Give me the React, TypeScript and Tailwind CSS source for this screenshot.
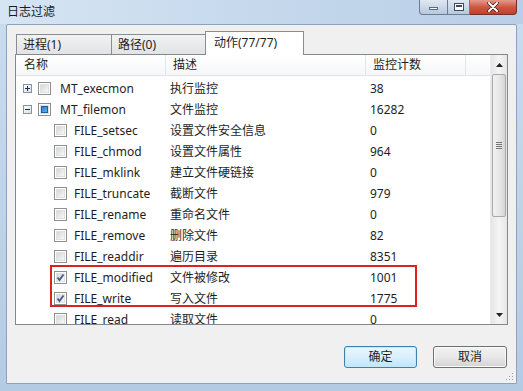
import * as React from 'react'

const FONT = '"Noto Sans", "Noto Sans CJK SC", sans-serif'

type Row = {
  name: string
  desc: string
  count: string
  level: 0 | 1
  expander?: '+' | '-'
  state: 'off' | 'on' | 'mixed'
}

const ROWS: Row[] = [
  { name: 'MT_execmon', desc: '执行监控', count: '38', level: 0, expander: '+', state: 'off' },
  { name: 'MT_filemon', desc: '文件监控', count: '16282', level: 0, expander: '-', state: 'mixed' },
  { name: 'FILE_setsec', desc: '设置文件安全信息', count: '0', level: 1, state: 'off' },
  { name: 'FILE_chmod', desc: '设置文件属性', count: '964', level: 1, state: 'off' },
  { name: 'FILE_mklink', desc: '建立文件硬链接', count: '0', level: 1, state: 'off' },
  { name: 'FILE_truncate', desc: '截断文件', count: '979', level: 1, state: 'off' },
  { name: 'FILE_rename', desc: '重命名文件', count: '0', level: 1, state: 'off' },
  { name: 'FILE_remove', desc: '删除文件', count: '82', level: 1, state: 'off' },
  { name: 'FILE_readdir', desc: '遍历目录', count: '8351', level: 1, state: 'off' },
  { name: 'FILE_modified', desc: '文件被修改', count: '1001', level: 1, state: 'on' },
  { name: 'FILE_write', desc: '写入文件', count: '1775', level: 1, state: 'on' },
  { name: 'FILE_read', desc: '读取文件', count: '0', level: 1, state: 'off' },
]

function Check({ state }: { state: Row['state'] }) {
  return (
    <span className="relative block w-[13px] h-[13px] shrink-0 border border-[#8e8f8f] bg-white p-px">
      <span className="block w-full h-full bg-gradient-to-br from-[#d4d6d9] to-[#f8f8f8] border border-[#e0e0e0]" />
      {state === 'mixed' && (
        <span className="absolute left-[2px] top-[2px] w-[7px] h-[7px] border border-[#1d5e9c] bg-gradient-to-br from-[#2a7fc8] to-[#5fb3ea]" />
      )}
      {state === 'on' && (
        <svg className="absolute left-0 top-0" width="11" height="11" viewBox="0 0 11 11">
          <path d="M2.5 5.5 L4.5 8 L8.5 2.5" fill="none" stroke="#3f5a8c" strokeWidth="1.8" />
        </svg>
      )}
    </span>
  )
}

function Expander({ sign }: { sign: '+' | '-' }) {
  return (
    <span className="relative block w-[9px] h-[9px] shrink-0 border border-[#8a94a0] bg-gradient-to-br from-white to-[#d8dde3]">
      <span className="absolute left-[1px] top-[3px] w-[5px] h-px bg-[#1f2f4f]" />
      {sign === '+' && <span className="absolute left-[3px] top-[1px] w-px h-[5px] bg-[#1f2f4f]" />}
    </span>
  )
}

function Tab({ label, active }: { label: string; active?: boolean }) {
  if (active) {
    return (
      <div className="relative z-10 -mb-px h-[24px] w-[99px] -ml-px border border-b-0 border-[#898c95] bg-white pl-[8px] pt-[2px] text-[12px] text-[#1e1e1e]">
        {label}
      </div>
    )
  }
  return (
    <div className="h-[20px] w-[96px] -mr-px border border-b-0 border-[#898c95] bg-gradient-to-b from-[#f2f2f2] to-[#e2e3e5] pl-[6px] text-[12px] leading-[19px] text-[#1e1e1e]">
      {label}
    </div>
  )
}

function CaptionButtons() {
  return (
    <div className="flex h-[15px] mr-[6px]">
      <div className="w-[29px] h-full border border-t-0 border-[#6b7c93] rounded-bl-[4px] bg-gradient-to-b from-[#dfe8f2] to-[#b7c9de] flex items-center justify-center">
        <span className="block w-[9px] h-[3px] mt-[3px] bg-[#f4f7fa] border border-[#5a6a80]" />
      </div>
      <div className="w-[22px] h-full border border-t-0 border-l-0 border-[#6b7c93] bg-gradient-to-b from-[#dfe8f2] to-[#b7c9de] flex items-center justify-center">
        <span className="block w-[10px] h-[8px] border border-[#3c4a5e] bg-white p-[1px]">
          <span className="block w-full h-full border-t-2 border-[#3c4a5e]" />
        </span>
      </div>
      <div className="w-[47px] h-full border border-t-0 border-l-0 border-[#6e3028] rounded-br-[4px] bg-gradient-to-b from-[#e39a8c] via-[#cf5642] to-[#c33f2c] flex items-center justify-center">
        <svg width="12" height="10" viewBox="0 0 12 10">
          <path d="M2 1 L10 9 M10 1 L2 9" stroke="#3b1d18" strokeWidth="3.4" strokeLinecap="round" />
          <path d="M2 1 L10 9 M10 1 L2 9" stroke="#ffffff" strokeWidth="2" strokeLinecap="round" />
        </svg>
      </div>
    </div>
  )
}

function ScrollBar() {
  return (
    <div className="w-[17px] h-full flex flex-col bg-gradient-to-r from-[#e6e6e6] via-[#f4f4f4] to-[#e6e6e6] border-l border-[#eaeaea]">
      <div className="h-[19px] flex items-center justify-center">
        <svg width="7" height="4" viewBox="0 0 7 4"><path d="M0 4 L3.5 0 L7 4 Z" fill="#222" /></svg>
      </div>
      <div className="h-[143px] mx-[1px] rounded-[2px] border border-[#a7a9ad] bg-gradient-to-r from-[#f1f1f1] via-[#e8e8e8] to-[#d5d5d5] flex flex-col items-center justify-center gap-[1px]">
        <span className="block w-[6px] h-px bg-[#777]" />
        <span className="block w-[6px] h-px bg-[#777]" />
        <span className="block w-[6px] h-px bg-[#777]" />
        <span className="block w-[6px] h-px bg-[#777]" />
      </div>
      <div className="flex-1" />
      <div className="h-[19px] flex items-center justify-center">
        <svg width="7" height="4" viewBox="0 0 7 4"><path d="M0 0 L7 0 L3.5 4 Z" fill="#222" /></svg>
      </div>
    </div>
  )
}

export default function App() {
  return (
    <div
      className="w-[523px] h-[391px] overflow-hidden flex flex-col bg-gradient-to-b from-[#cbdcee] to-[#b4cbe4]"
      style={{ fontFamily: FONT }}
    >
      {/* title bar */}
      <div className="h-[24px] flex justify-between items-start bg-gradient-to-r from-[#d6e5f4] via-[#c5d8ec] to-[#b9cfe7]">
        <div className="pl-[7px] pt-[3px] text-[12px] text-[#1a1a1a]">日志过滤</div>
        <CaptionButtons />
      </div>

      {/* client area */}
      <div className="mx-[6px] h-[360px] rounded-t-[2px] border border-[#8da2bd] bg-[#f0f0f0] flex flex-col">
        {/* tabs */}
        <div className="flex items-end h-[29px] pl-[9px]">
          <Tab label="进程(1)" />
          <Tab label="路径(0)" />
          <Tab label="动作(77/77)" active />
        </div>

        {/* list view */}
        <div className="ml-[8px] w-[493px] h-[271px] border border-[#828790] bg-white flex overflow-hidden">
          <div className="relative flex-1 flex flex-col overflow-hidden text-[12px] text-[#1e1e1e]">
            <div className="h-[21px] shrink-0 grid grid-cols-[150px_200px_100px_1fr] border-b border-[#e0e3e8] bg-gradient-to-b from-white to-[#f6f7f8]">
              <div className="pl-[8px] leading-[20px] border-r border-[#e3e5e8]">名称</div>
              <div className="pl-[7px] leading-[20px] border-r border-[#e3e5e8]">描述</div>
              <div className="pl-[7px] leading-[20px] border-r border-[#e3e5e8]">监控计数</div>
              <div />
            </div>
            <div className="pt-[2px]">
              {ROWS.map((r) => (
                <div key={r.name} className="h-[21px] shrink-0 grid grid-cols-[150px_200px_100px_1fr] items-center leading-[21px]">
                  {r.level === 0 ? (
                    <div className="flex items-center pl-[7px]">
                      <Expander sign={r.expander!} />
                      <div className="ml-[6px]"><Check state={r.state} /></div>
                      <span className="ml-[9px] whitespace-nowrap">{r.name}</span>
                    </div>
                  ) : (
                    <div className="flex items-center pl-[38px]">
                      <Check state={r.state} />
                      <span className="ml-[7px] whitespace-nowrap">{r.name}</span>
                    </div>
                  )}
                  <div className="pl-[4px] whitespace-nowrap">{r.desc}</div>
                  <div className="pl-[4px]">{r.count}</div>
                  <div />
                </div>
              ))}
            </div>
            {/* annotation box */}
            <div className="absolute left-[34px] top-[210px] w-[367px] h-[42px] border-2 border-[#e0201c]" />
          </div>
          <ScrollBar />
        </div>

        {/* buttons */}
        <div className="flex justify-end gap-[16px] mt-[21px] pr-[9px]">
          <button className="w-[73px] h-[22px] rounded-[3px] border border-[#3c7fb1] bg-gradient-to-b from-[#eaf6fd] via-[#d9f0fc] to-[#bee6fd] shadow-[inset_0_0_0_1px_#c8e8fa] text-[12px] leading-[20px] text-[#1e1e1e]">
            确定
          </button>
          <button className="w-[74px] h-[22px] rounded-[3px] border border-[#707070] bg-gradient-to-b from-[#f2f2f2] via-[#e8e8e8] to-[#d3d3d3] shadow-[inset_0_0_0_1px_#fafafa] text-[12px] leading-[20px] text-[#1e1e1e]">
            取消
          </button>
        </div>
        <div className="flex-1 flex items-end justify-end pr-[2px] pb-[2px]">
          <svg width="8" height="8" viewBox="0 0 8 8">
            <rect x="6" y="0" width="1" height="1" fill="#a0a0a0" />
            <rect x="3" y="3" width="1" height="1" fill="#a0a0a0" />
            <rect x="6" y="3" width="1" height="1" fill="#a0a0a0" />
            <rect x="0" y="6" width="1" height="1" fill="#a0a0a0" />
            <rect x="3" y="6" width="1" height="1" fill="#a0a0a0" />
            <rect x="6" y="6" width="1" height="1" fill="#a0a0a0" />
          </svg>
        </div>
      </div>
    </div>
  )
}
